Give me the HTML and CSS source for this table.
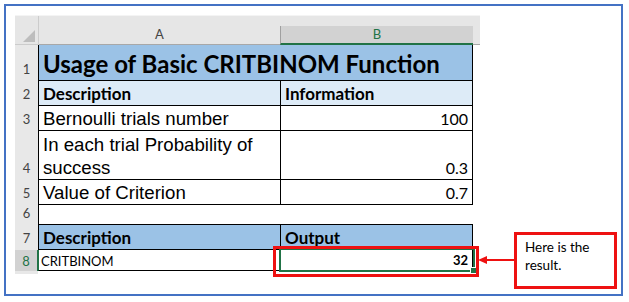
FILE: index.html
```html
<!DOCTYPE html>
<html>
<head>
<meta charset="utf-8">
<link rel="stylesheet" href="styles.css">
</head>
<body>
<div class="frame">
  <div class="sheet">
    <div class="colheads">
      <div class="corner">
        <svg class="tri" width="13" height="13" viewBox="0 0 13 13"><polygon points="12,0 12,12 0,12" fill="#bdbdbd"/></svg>
      </div>
      <div class="colhead col-a">A</div>
      <div class="colhead col-b">B</div>
      <div class="colhead col-pad"></div>
    </div>
    <div class="grid">
      <div class="rowhead">1</div>
      <div class="cell title span2">Usage of Basic CRITBINOM Function</div>

      <div class="rowhead">2</div>
      <div class="cell head-light a">Description</div>
      <div class="cell head-light b hl">Information</div>

      <div class="rowhead">3</div>
      <div class="cell text a">Bernoulli trials number</div>
      <div class="cell num b">100</div>

      <div class="rowhead">4</div>
      <div class="cell text a wrap">In each trial Probability of<br>success</div>
      <div class="cell num b">0.3</div>

      <div class="rowhead">5</div>
      <div class="cell text a">Value of Criterion</div>
      <div class="cell num b">0.7</div>

      <div class="rowhead">6</div>
      <div class="cell blank a"></div>
      <div class="cell blank b"></div>

      <div class="rowhead">7</div>
      <div class="cell head-dark a">Description</div>
      <div class="cell head-dark b hl">Output</div>

      <div class="rowhead selrow">8</div>
      <div class="cell small a selleft">CRITBINOM</div>
      <div class="cell result b">32</div>

      <div class="rowhead stub"></div>
    </div>
  </div>

  <div class="selection"><span class="handle"></span></div>
  <div class="redbox"></div>
  <svg class="arrow" width="44" height="12" viewBox="0 0 44 12">
    <line x1="8" y1="6" x2="44" y2="6" stroke="#ee1111" stroke-width="2"/>
    <polygon points="0,6 9,2 9,10" fill="#ee1111"/>
  </svg>
  <div class="callout">Here is the<br>result.</div>
</div>
</body>
</html>
```
FILE: styles.css
```css
html, body {
  margin: 0;
  padding: 0;
  background: #ffffff;
}

.frame {
  position: relative;
  box-sizing: border-box;
  width: 619px;
  height: 292px;
  margin: 4px;
  border: 2px solid #4472c4;
  padding: 9px 0 0 9px;
  background: #ffffff;
}

.sheet {
  width: 465px;
}

.colheads {
  display: flex;
  height: 30px;
  background: #e6e6e6;
  border-top: 1px solid #f4f4f4;
  box-sizing: border-box;
}

.corner {
  box-sizing: border-box;
  width: 24px;
  height: 29px;
  border-right: 1px solid #cccccc;
  border-bottom: 1px solid #cccccc;
  display: flex;
  align-items: flex-end;
  justify-content: flex-end;
  padding: 0 2px 1px 0;
}

.tri {
  display: block;
}

.colhead {
  box-sizing: border-box;
  height: 29px;
  font-family: Lato, "Open Sans", sans-serif;
  font-size: 13px;
  line-height: 13px;
  color: #444444;
  display: flex;
  align-items: flex-end;
  justify-content: center;
  padding-bottom: 3px;
}

.col-a {
  width: 241px;
  border-bottom: 1px solid #a8a8a8;
}

.col-b {
  width: 193px;
  height: 19px;
  align-self: flex-end;
  background: #d2d2d2;
  border-left: 1px solid #a0a0a0;
  border-bottom: 2px solid #217346;
  color: #217346;
  padding-bottom: 2px;
}

.col-pad {
  width: 7px;
  border-bottom: 1px solid #a8a8a8;
}

.grid {
  display: grid;
  grid-template-columns: 23px 243px 192px;
  grid-template-rows: 36px 25px 25px 49px 25px 20px 25px 21px 3px;
}

.rowhead {
  background: #e8e8e8;
  font-family: Lato, "Open Sans", sans-serif;
  font-size: 13px;
  line-height: 13px;
  color: #444444;
  display: flex;
  align-items: flex-end;
  justify-content: center;
  padding-bottom: 5px;
  box-sizing: border-box;
}

.rowhead.selrow {
  background: #d2d2d2;
  color: #217346;
  border-right: 1px solid #217346;
  padding-bottom: 3px;
}

.rowhead.stub {
  padding: 0;
}

.cell {
  box-sizing: border-box;
  border-bottom: 1px solid #000000;
  display: flex;
  align-items: flex-end;
  color: #000000;
  white-space: nowrap;
  overflow: hidden;
}

.cell.a {
  border-left: 1px solid #000000;
  border-right: 1px solid #000000;
  padding-left: 4px;
}

.cell.b {
  border-right: 1px solid #000000;
  padding-left: 4px;
  padding-right: 4px;
}

.cell.span2 {
  grid-column: span 2;
  border-left: 1px solid #000000;
  border-right: 1px solid #000000;
  padding-left: 4px;
}

.title {
  background: #9bc2e6;
  font-family: Lato, "Open Sans", sans-serif;
  font-weight: 700;
  font-size: 24px;
  line-height: 24px;
  padding-bottom: 4px;
}

.head-light,
.head-dark {
  font-family: Lato, "Open Sans", sans-serif;
  font-weight: 700;
  font-size: 17px;
  line-height: 17px;
  padding-bottom: 3px;
}

.head-light {
  background: #ddebf7;
}

.head-dark {
  background: #9bc2e6;
}

.hl.b {
  padding-left: 4px;
}

.text {
  font-family: "Liberation Sans", Arial, sans-serif;
  font-size: 18.67px;
  line-height: 19px;
  padding-bottom: 2px;
}

.text.wrap {
  line-height: 23px;
  white-space: normal;
  padding-bottom: 0;
}

.num {
  font-family: Lato, "Open Sans", sans-serif;
  font-size: 16px;
  line-height: 16px;
  justify-content: flex-end;
  padding-bottom: 3px;
}

.blank.a {
  border-right: none;
}

.blank.b {
  border-right: none;
}

.small {
  font-family: Lato, "Open Sans", sans-serif;
  font-size: 13px;
  line-height: 13px;
  padding-bottom: 2px;
}

.cell.a.selleft {
  border-left: 1px solid #217346;
  padding-left: 2px;
}

.result {
  font-family: Lato, "Open Sans", sans-serif;
  font-weight: 700;
  font-size: 13px;
  line-height: 13px;
  justify-content: flex-end;
  padding-bottom: 3px;
}

.selection {
  position: absolute;
  left: 273px;
  top: 242px;
  width: 196px;
  height: 24px;
  box-sizing: border-box;
  border: 2px solid #217346;
}

.handle {
  position: absolute;
  right: -3px;
  bottom: -3px;
  width: 5px;
  height: 5px;
  background: #217346;
  border: 1px solid #ffffff;
  border-right: none;
  border-bottom: none;
}

.redbox {
  position: absolute;
  left: 267px;
  top: 240px;
  width: 206px;
  height: 31px;
  box-sizing: border-box;
  border: 3px solid #ee1111;
}

.arrow {
  position: absolute;
  left: 472px;
  top: 248px;
}

.callout {
  position: absolute;
  left: 508px;
  top: 226px;
  width: 103px;
  height: 57px;
  box-sizing: border-box;
  border: 3px solid #ee1111;
  background: #ffffff;
  padding: 3px 0 0 8px;
  font-family: Lato, "Open Sans", sans-serif;
  font-size: 13.5px;
  line-height: 18px;
  color: #000000;
}
```
